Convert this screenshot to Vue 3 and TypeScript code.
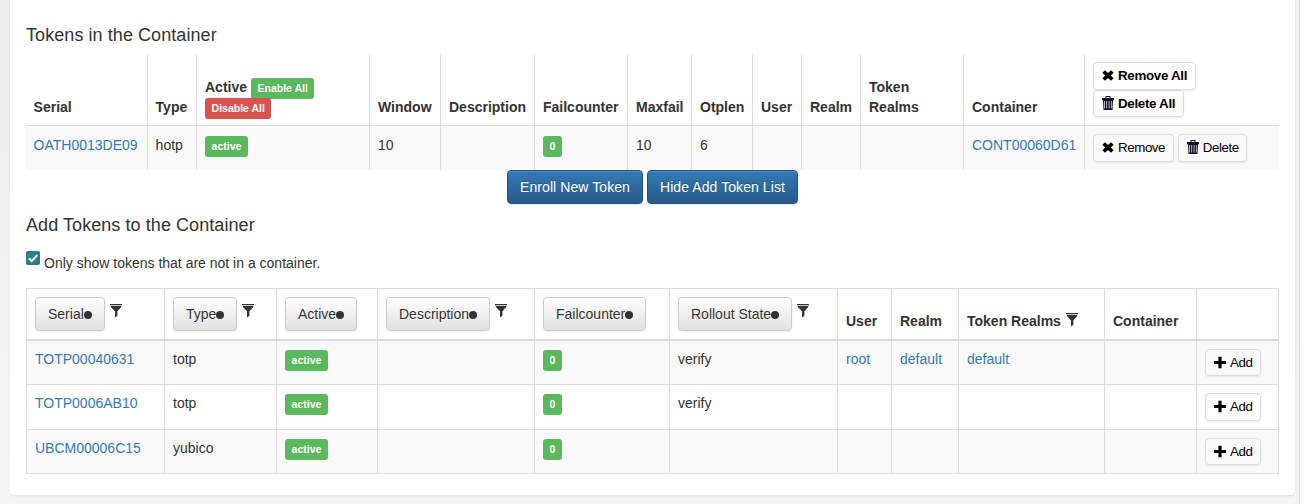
<script setup lang="ts">
import { h, type FunctionalComponent } from 'vue'

type IconName = 'remove' | 'trash' | 'plus' | 'filter'
interface SortColumn { label: string; sort: boolean; filter: boolean }
interface TokenRow { serial: string; type: string; state: string; user: string; realm: string }

const shapes: Record<IconName, string> = {
  remove: 'M3 1.2 6 4 9 1.2 11.6 3.8 8.8 6.5 11.6 9.2 9 11.8 6 9 3 11.8.4 9.2 3.2 6.5.4 3.8z',
  plus: 'M4.4 .8h3.2v4.1H12v3.2H7.6v4.1H4.4V8.1H0V4.9h4.4z',
  trash: 'M3.5 0h5v2H12v2.2H0V2h3.5zM4.5 1v1h3V1zM1 4.2h10L10.5 14h-9zM2.3 5v7.5H3V5zM4.4 5v7.5h.7V5zM6.7 5v7.5h.7V5zM8.9 5v7.5h.7V5z',
  filter: 'M0 0h12v1.2H0zM.7 1.9h10.6v1.2L7.4 7.3V11.7L5 13.4V7.3L.9 3.1z'
}
const Icon: FunctionalComponent<{ name: IconName }> = (props) =>
  h('svg', { class: ['icon', props.name], viewBox: '0 0 12 14', 'aria-hidden': 'true' }, [
    h('path', { d: shapes[props.name], fill: 'currentColor', 'fill-rule': 'evenodd' })
  ])

const topWidths: number[] = [122, 49, 173, 71, 94, 93, 64, 61, 49, 59, 103, 121, 194]
const listWidths: number[] = [138, 112, 101, 157, 135, 168, 54, 67, 146, 92, 81]
const columns: SortColumn[] = [
  { label: 'Serial', sort: true, filter: true },
  { label: 'Type', sort: true, filter: true },
  { label: 'Active', sort: true, filter: false },
  { label: 'Description', sort: true, filter: true },
  { label: 'Failcounter', sort: true, filter: false },
  { label: 'Rollout State', sort: true, filter: true },
  { label: 'User', sort: false, filter: false },
  { label: 'Realm', sort: false, filter: false },
  { label: 'Token Realms', sort: false, filter: true },
  { label: 'Container', sort: false, filter: false },
  { label: '', sort: false, filter: false }
]
const tokens: TokenRow[] = [
  { serial: 'TOTP00040631', type: 'totp', state: 'verify', user: 'root', realm: 'default' },
  { serial: 'TOTP0006AB10', type: 'totp', state: 'verify', user: '', realm: '' },
  { serial: 'UBCM00006C15', type: 'yubico', state: '', user: '', realm: '' }
]
</script>

<template>
  <div class="page">
    <main class="panel">
      <h4>Tokens in the Container</h4>
      <table class="assigned">
        <colgroup><col v-for="(w, i) in topWidths" :key="i" :style="{ width: w + 'px' }"></colgroup>
        <thead>
          <tr>
            <th>Serial</th><th>Type</th>
            <th class="active-head">Active <button class="label">Enable All</button><br><button class="label danger">Disable All</button></th>
            <th>Window</th><th>Description</th><th>Failcounter</th><th>Maxfail</th><th>Otplen</th>
            <th>User</th><th>Realm</th><th>Token<br>Realms</th><th>Container</th>
            <th>
              <div class="stack">
                <button class="small"><Icon name="remove" />Remove All</button>
                <button class="small"><Icon name="trash" />Delete All</button>
              </div>
            </th>
          </tr>
        </thead>
        <tbody>
          <tr>
            <td><a>OATH0013DE09</a></td><td>hotp</td><td><span class="label">active</span></td><td>10</td><td></td>
            <td><span class="label">0</span></td><td>10</td><td>6</td><td></td><td></td><td></td>
            <td><a>CONT00060D61</a></td>
            <td><div class="pair"><button class="small"><Icon name="remove" />Remove</button><button class="small"><Icon name="trash" />Delete</button></div></td>
          </tr>
        </tbody>
      </table>
      <div class="actions"><button class="primary">Enroll New Token</button><button class="primary">Hide Add Token List</button></div>
      <h4 class="second">Add Tokens to the Container</h4>
      <label class="check"><span class="box"><svg viewBox="0 0 14 14"><path d="m3 7.3 2.8 2.8L11.2 4" fill="none" stroke="#fff" stroke-width="2" /></svg></span>Only show tokens that are not in a container.</label>
      <table class="available">
        <colgroup><col v-for="(w, i) in listWidths" :key="i" :style="{ width: w + 'px' }"></colgroup>
        <thead>
          <tr>
            <th v-for="(c, i) in columns" :key="i">
              <div class="heading" :class="{ plain: !c.sort }">
                <button v-if="c.sort" class="sort">{{ c.label }}<i class="dot"></i></button>
                <span v-else>{{ c.label }}</span>
                <Icon v-if="c.filter" name="filter" />
              </div>
            </th>
          </tr>
        </thead>
        <tbody>
          <tr v-for="t in tokens" :key="t.serial">
            <td><a>{{ t.serial }}</a></td><td>{{ t.type }}</td><td><span class="label">active</span></td><td></td>
            <td><span class="label">0</span></td><td>{{ t.state }}</td><td><a>{{ t.user }}</a></td><td><a>{{ t.realm }}</a></td>
            <td><a>{{ t.realm }}</a></td><td></td><td><div class="pair"><button class="small"><Icon name="plus" />Add</button></div></td>
          </tr>
        </tbody>
      </table>
    </main>
    <div class="edge"></div>
  </div>
</template>

<style>
body { margin: 0; overflow: hidden; }
</style>

<style scoped>
* { box-sizing: border-box; }
.page { display: flex; width: 1306px; height: 504px; padding-left: 10px; background: linear-gradient(#eee, #f5f5f5); font: 14px/20px "Liberation Sans", Arial, sans-serif; color: #333; }
.panel { width: 1285px; height: 495px; padding: 25px 16px 0; background: #fff; border-radius: 0 0 4px 4px; box-shadow: 0 1px 2px rgba(0,0,0,.09); }
.edge { width: 7px; margin-left: 4px; border-left: 1px solid #ddd; background: #fff; }
h4 { margin: 0 0 9px; font-size: 18px; line-height: 20px; font-weight: 400; letter-spacing: .07px; }
h4.second { margin: 11px 0 16px; }
table { width: 1253px; table-layout: fixed; border-collapse: separate; border-spacing: 0; }
th, td { padding: 8px; text-align: left; font-weight: 400; white-space: nowrap; }
th { vertical-align: bottom; font-weight: 700; }
td { vertical-align: top; }
.assigned th { height: 71px; padding: 8px 0 8px 7.6px; }
.assigned td { height: 45px; padding: 9px 0 7px 7.6px; border-top: 1px solid #ddd; background: #f9f9f9; }
.assigned th:not(:last-child), .assigned td:not(:last-child) { border-right: 1px solid #ddd; }
.assigned th:nth-child(3), .assigned td:nth-child(3), .assigned th:nth-child(n+4), .assigned td:nth-child(n+4) { padding-left: 8px; }
.assigned .pair { margin-top: -1px; }
a { color: #337ab7; text-decoration: none; }
button { font-family: inherit; margin: 0; }
.label { display: inline-block; height: 21px; padding: 0 6.6px; border: 0; border-radius: 3px; background: #5cb85c; color: #fff; font-size: 10.5px; line-height: 21px; font-weight: 700; vertical-align: middle; }
.danger { background: #d9534f; }
th .label { vertical-align: top; margin-top: 1px; margin-bottom: -2px; }
.small { display: inline-flex; align-items: center; height: 28px; padding: 0 7.6px 0 8px; gap: 4px; border: 1px solid #ddd; border-radius: 4px; background: transparent; color: #000; font-size: 13.33px; line-height: 20px; letter-spacing: -.42px; box-shadow: 0 1px 2px rgba(0,0,0,.08); }
.stack { display: flex; flex-direction: column; align-items: flex-start; }
.stack .small { font-weight: 700; letter-spacing: -.3px; }
.stack .small + .small { height: 27px; }
.pair { display: flex; gap: 4px; }
.icon { display: block; width: 12px; height: 14px; flex: none; }
.trash { color: #111129; position: relative; top: -1px; }
.actions { display: flex; justify-content: center; gap: 4px; }
.primary { height: 34px; padding: 6px 12px; border: 1px solid #245580; border-radius: 4px; background: linear-gradient(#337ab7, #265a88); box-shadow: inset 0 1px rgba(255,255,255,.15), 0 1px 1px rgba(0,0,0,.08); color: #fff; font-size: 14px; line-height: 20px; letter-spacing: .08px; text-shadow: 0 -1px rgba(0,0,0,.2); }
.check { display: flex; height: 20px; margin-bottom: 17px; align-items: flex-start; line-height: 24px; gap: 4px; }
.box { width: 14px; height: 14px; border-radius: 2px; background: #2e7d83; }
.box svg { display: block; }
.available { border: 1px solid #ddd; border-bottom: 0; }
.available th { height: 52px; padding: 8px; border-bottom: 2px solid #ddd; }
.available td { height: 45px; padding: 8px; border-bottom: 1px solid #ddd; }
.available th:not(:last-child), .available td:not(:last-child) { border-right: 1px solid #ddd; }
.available tbody tr:nth-child(odd) { background: #f9f9f9; }
.available tbody tr:nth-child(odd) td { height: 44px; }
.available tbody tr:nth-child(odd) .small { height: 27px; }
.heading { display: flex; gap: 5px; align-items: flex-start; }
.heading .icon { margin-top: 7px; }
.plain .icon { margin-top: 2px; }
.sort { display: flex; align-items: center; height: 34px; padding: 0 12px; border: 1px solid #ccc; border-radius: 4px; background: linear-gradient(#fff, #e0e0e0); color: #333; font-size: 14px; text-shadow: 0 1px #fff; box-shadow: 0 1px 2px rgba(0,0,0,.08); }
.dot { width: 8px; height: 8px; margin-top: 2px; border-radius: 50%; background: #333; }
</style>
